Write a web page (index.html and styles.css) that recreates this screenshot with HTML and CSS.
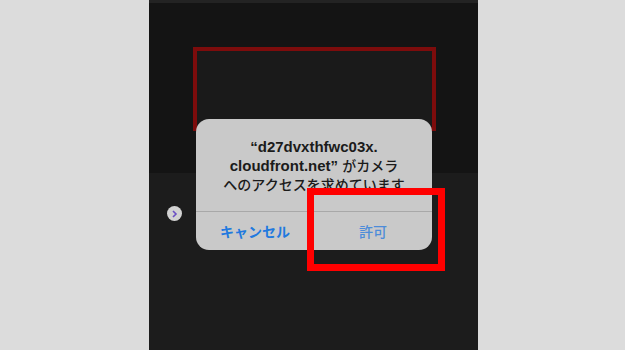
FILE: index.html
```html
<!DOCTYPE html>
<html>
<head>
  <meta charset="UTF-8">
  <title>カメラへのアクセス</title>
  <link rel="stylesheet" href="styles.css">
</head>
<body>
  <div class="stage">
    <div class="phone">
      <div class="status-strip"></div>
      <div class="camera-area">
        <div class="scan-frame"></div>
      </div>
      <div class="lower-area">
        <div class="more-button">
          <svg width="7" height="8" viewBox="0 0 7 8"><path d="M2 1 L5 4 L2 7" fill="none" stroke="#6b4fc4" stroke-width="1.6"/></svg>
        </div>
      </div>

      <div class="alert">
        <div class="alert-message">
          “d27dvxthfwc03x.<br>
          cloudfront.net” <span class="ja">がカメラ</span><br>
          <span class="ja">へのアクセスを求めています</span>
        </div>
        <div class="alert-buttons">
          <button class="alert-button cancel">キャンセル</button>
          <button class="alert-button allow">許可</button>
        </div>
      </div>

      <div class="highlight"></div>
    </div>
  </div>
</body>
</html>
```

FILE: styles.css
```css
body {
  margin: 0;
  background-color: #dcdcdc;
  font-family: "Liberation Sans", "Noto Sans CJK JP", sans-serif;
}
.stage {
  display: flex;
  height: 350px;
  padding-left: 149px;
}
.phone {
  position: relative;
  width: 329px;
  display: flex;
  flex-direction: column;
  background-color: #1c1c1c;
}
.status-strip {
  height: 3px;
  background-color: #232323;
}
.camera-area {
  height: 126px;
  padding: 44px 42px 0 44px;
  background-color: #141414;
}
.scan-frame {
  height: 76px;
  border: 4px solid #7d0c0c;
  background-color: #1a1a1a;
}
.lower-area {
  flex: 1;
  padding: 33px 0 0 18px;
}
.more-button {
  width: 15px;
  height: 15px;
  border-radius: 50%;
  background-color: #d2d2d2;
  display: flex;
  align-items: center;
  justify-content: center;
}
.alert {
  position: absolute;
  left: 47px;
  top: 119px;
  width: 236px;
  background-color: #c9c9c9;
  border-radius: 13px;
  overflow: hidden;
}
.alert-message {
  padding: 19px 10px 17px;
  text-align: center;
  font-size: 15px;
  font-weight: 700;
  line-height: 18px;
  color: #1b1b1b;
}
.alert-message .ja {
  font-family: "Noto Sans CJK JP", sans-serif;
  font-size: 14px;
  font-weight: 500;
}
.alert-buttons {
  display: flex;
  border-top: 1px solid #a8a8a8;
}
.alert-button {
  flex: 1;
  height: 38px;
  padding: 0;
  border: none;
  background: none;
  font-family: "Noto Sans CJK JP", sans-serif;
  font-size: 14px;
}
.alert-button.cancel {
  color: #2179df;
  font-weight: 700;
}
.alert-button.allow {
  color: #4d8cd9;
  font-weight: 500;
}
.highlight {
  position: absolute;
  left: 158px;
  top: 188px;
  width: 124px;
  height: 69px;
  border: 7px solid #ff0000;
}
```
